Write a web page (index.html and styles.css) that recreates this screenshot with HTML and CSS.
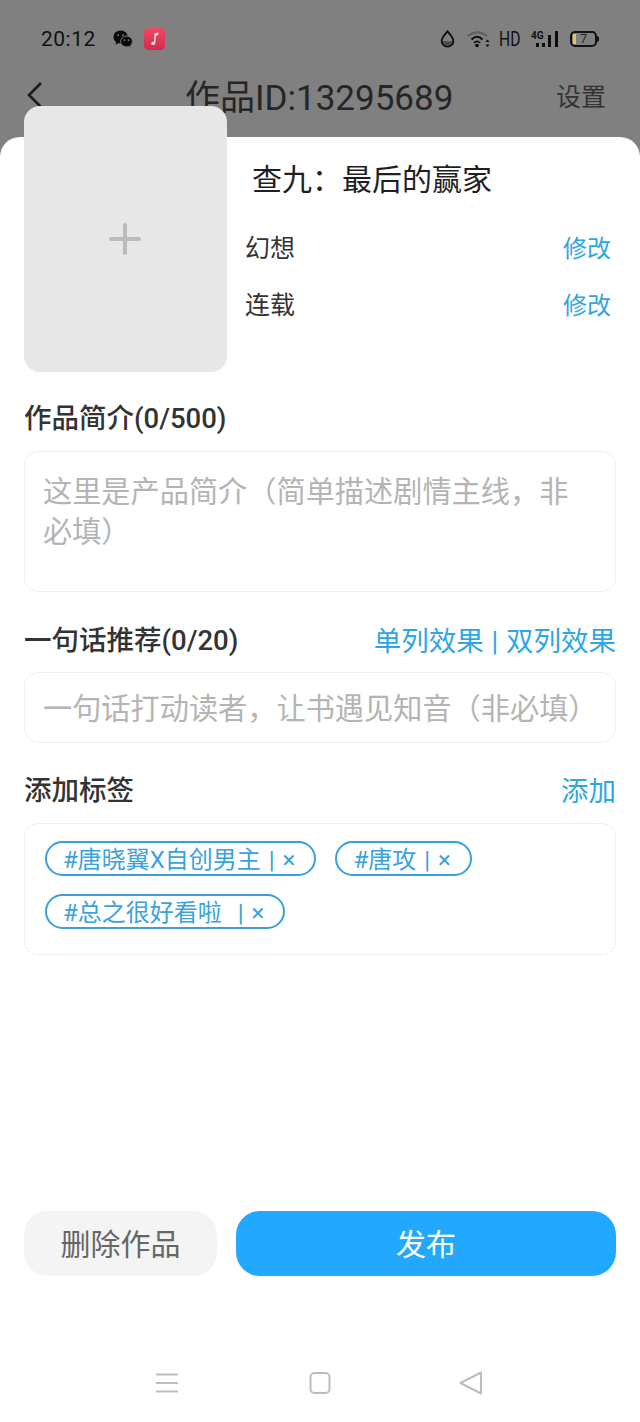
FILE: index.html
```html
<!DOCTYPE html>
<html lang="zh-CN">
<head>
    <meta charset="UTF-8">
    <meta name="viewport" content="width=device-width, initial-scale=1.0">
    <title>作品设置</title>
    <link rel="stylesheet" href="styles.css">
</head>
<body>
    <div class="screen">
        <div class="status-bar">
            <div class="status-left">
                <span class="clock">20:12</span>
                <svg class="wechat-icon" width="20" height="18" viewBox="0 0 17 16">
                    <ellipse cx="6.400" cy="6.200" rx="6.400" ry="5.800" fill="#0a0a0a"/>
                    <path d="M2.600 10l-.8 3 3-1.600z" fill="#0a0a0a"/>
                    <circle cx="4.200" cy="4.600" r=".8" fill="#808080"/>
                    <circle cx="8.400" cy="4.600" r=".8" fill="#808080"/>
                    <ellipse cx="11.600" cy="10.200" rx="5.300" ry="4.800" fill="#0a0a0a" stroke="#808080" stroke-width=".8"/>
                    <path d="M14 14l1 1.600-.2-2.400z" fill="#0a0a0a"/>
                    <circle cx="9.800" cy="9" r=".7" fill="#808080"/>
                    <circle cx="13.400" cy="9" r=".7" fill="#808080"/>
                </svg>
                <svg class="music-icon" width="21" height="22" viewBox="0 0 21 22">
                    <defs>
                        <linearGradient id="musicBg" x1="0" y1="0" x2="0" y2="1">
                            <stop offset="0" stop-color="#ee4a63"/>
                            <stop offset="1" stop-color="#d62a50"/>
                        </linearGradient>
                    </defs>
                    <rect width="21" height="22" rx="4.500" fill="url(#musicBg)"/>
                    <path d="M10.500 5.400l3.800-.9v2.600l-2.400.6-.6 7.400c-.1 1.200-1 1.900-2.200 1.900-1.100 0-1.800-.7-1.800-1.600 0-1 .9-1.700 2-1.700.3 0 .6 0 .7.1z" fill="#fbe3e8"/>
                </svg>
            </div>
            <div class="status-right">
                <svg width="15" height="18" viewBox="0 0 15 18">
                    <path d="M7.500 1.400c2.400 3 5.800 5.800 5.800 9.500 0 3.100-2.600 5.700-5.800 5.700s-5.800-2.600-5.800-5.700c0-3.700 3.400-6.500 5.800-9.500z" fill="none" stroke="#0c0c0c" stroke-width="1.800"/>
                    <path d="M2.600 11.300h9.800c-.3 2.400-2.400 4.400-4.900 4.400s-4.600-2-4.900-4.400z" fill="#4a4a4a"/>
                </svg>
                <svg class="wifi-icon" width="23" height="18" viewBox="0 0 23 18">
                    <path d="M1 6Q10.500-1.500 20 6" fill="none" stroke="#5f5f5f" stroke-width="2"/>
                    <path d="M4.500 9.500Q10 4 15.500 9.500" fill="none" stroke="#0c0c0c" stroke-width="2"/>
                    <path d="M7 12.800Q10 10 13 12.800" fill="none" stroke="#0c0c0c" stroke-width="1.800"/>
                    <circle cx="10" cy="15.500" r="1.800" fill="#0c0c0c"/>
                    <path d="M20.500 9.500l-2 2.500h4zM20.500 17l-2-2.500h4z" fill="#0c0c0c"/>
                </svg>
                <span class="hd">HD</span>
                <div class="signal">
                    <span class="signal-label">4G</span>
                    <svg width="27" height="18" viewBox="0 0 27 18">
                        <path d="M5 13h3v4H5zM11 13h3v4h-3zM17 5h3v12h-3zM24 1h3v16h-3z" fill="#0c0c0c"/>
                    </svg>
                </div>
                <div class="battery">
                    <span class="battery-level"></span>
                    <span class="battery-num">7</span>
                </div>
            </div>
        </div>

        <div class="nav-bar">
            <svg class="back-icon" width="18" height="28" viewBox="0 0 18 28">
                <path d="M15 2L3 14l12 12" fill="none" stroke="#1c1c1c" stroke-width="2.600"/>
            </svg>
            <span class="nav-title">作品ID:13295689</span>
            <span class="nav-action">设置</span>
        </div>

        <div class="sheet">
            <div class="book-head">
                <div class="cover">
                    <svg class="cover-plus" width="32" height="32" viewBox="0 0 32 32">
                        <path d="M2 16h28M16 2v28" stroke="#bbb" stroke-width="4" stroke-linecap="round"/>
                    </svg>
                </div>
                <div class="book-info">
                    <div class="book-title">查九：最后的赢家</div>
                    <div class="info-row"><span>幻想</span><a>修改</a></div>
                    <div class="info-row"><span>连载</span><a>修改</a></div>
                </div>
            </div>

            <div class="field-head field-intro"><span class="field-label">作品简介(0/500)</span></div>
            <div class="box box-intro">这里是产品简介（简单描述剧情主线，非必填）</div>

            <div class="field-head field-rec">
                <span class="field-label">一句话推荐(0/20)</span>
                <a class="field-link">单列效果 | 双列效果</a>
            </div>
            <div class="box box-rec">一句话打动读者，让书遇见知音（非必填）</div>

            <div class="field-head field-tags">
                <span class="field-label">添加标签</span>
                <a class="field-link">添加</a>
            </div>
            <div class="box box-tags">
                <span class="tag">#唐晓翼X自创男主 | ×</span>
                <span class="tag">#唐攻 | ×</span>
                <span class="tag">#总之很好看啦&nbsp; | ×</span>
            </div>

            <div class="actions">
                <button class="btn-delete">删除作品</button>
                <button class="btn-publish">发布</button>
            </div>

            <div class="sys-nav">
                <svg width="24" height="22" viewBox="0 0 24 22">
                    <path d="M1 2.500h22M1 11h22M1 19.500h22" stroke="#bdbdbd" stroke-width="2"/>
                </svg>
                <svg width="22" height="22" viewBox="0 0 22 22">
                    <rect x="1.500" y="1" width="19" height="20" rx="4" fill="none" stroke="#bdbdbd" stroke-width="2"/>
                </svg>
                <svg class="sys-back" width="24" height="24" viewBox="0 0 24 24">
                    <path d="M22 1.500L1.500 12 22 22.500z" fill="none" stroke="#bdbdbd" stroke-width="2" stroke-linejoin="round"/>
                </svg>
            </div>
        </div>
    </div>
</body>
</html>
```

FILE: styles.css
```css
* {
    box-sizing: border-box;
}
body {
    margin: 0;
    font-family: Roboto, "Noto Sans CJK SC", sans-serif;
    background-color: #808080;
}
.screen {
    width: 640px;
    height: 1422px;
    overflow: hidden;
    display: flex;
    flex-direction: column;
}
.status-bar {
    height: 76px;
    padding: 2px 43px 0 41px;
    display: flex;
    justify-content: space-between;
    align-items: center;
}
.status-left, .status-right {
    display: flex;
    align-items: center;
}
.clock {
    font-size: 21px;
    color: #111;
    margin-right: 17px;
    letter-spacing: .5px;
}
.music-icon {
    margin-left: 11px;
}
.wifi-icon {
    margin-left: 12px;
}
.hd {
    width: 21px;
    margin-left: 9px;
    font-size: 20px;
    color: #111;
    transform: scaleX(.78);
    transform-origin: left center;
}
.signal {
    position: relative;
    height: 18px;
    margin-left: 11px;
}
.signal-label {
    position: absolute;
    left: 0;
    top: 0;
    font-size: 10px;
    line-height: 11px;
    font-weight: 700;
    color: #111;
}
.battery {
    position: relative;
    width: 27px;
    height: 16px;
    margin-left: 12px;
    border: 2px solid #111;
    border-radius: 5px;
    text-align: center;
}
.battery::after {
    content: "";
    position: absolute;
    right: -4px;
    top: 3px;
    width: 2px;
    height: 6px;
    background-color: #111;
    border-radius: 0 2px 2px 0;
}
.battery-level {
    position: absolute;
    left: 1px;
    top: 1px;
    width: 3px;
    height: 10px;
    background-color: #e6c45c;
}
.battery-num {
    display: block;
    font-size: 12px;
    line-height: 12px;
    color: #222;
}
.nav-bar {
    height: 61px;
    display: flex;
    align-items: flex-start;
    padding: 3px 34px 0 26px;
}
.back-icon {
    margin-top: 2px;
}
.nav-title {
    margin-left: 141px;
    font-size: 35px;
    line-height: 40px;
    color: #262626;
}
.nav-action {
    margin-left: auto;
    font-size: 25px;
    line-height: 38px;
    color: #333;
}
.sheet {
    flex: 1;
    background-color: #fff;
    border-radius: 20px 20px 0 0;
    padding: 0 24px;
    display: flex;
    flex-direction: column;
}
.book-head {
    display: flex;
    height: 264px;
    margin-top: -31px;
}
.cover {
    width: 203px;
    height: 266px;
    flex: none;
    background-color: #e7e7e7;
    border-radius: 16px;
    display: flex;
    align-items: center;
    justify-content: center;
}
.cover-plus {
    margin-right: 1px;
}
.book-info {
    flex: 1;
    padding: 54px 5px 0 18px;
}
.book-title {
    margin-left: 7px;
    font-size: 30px;
    line-height: 40px;
    color: #1f1f1f;
}
.info-row {
    display: flex;
    justify-content: space-between;
    font-size: 25px;
    line-height: 36px;
    height: 57px;
    color: #333;
}
.book-title + .info-row {
    margin-top: 31px;
}
.info-row a {
    font-size: 24px;
}
.info-row a, .field-link {
    color: #2fa6e4;
}
.field-head {
    display: flex;
    justify-content: space-between;
    align-items: center;
    height: 40px;
}
.field-label {
    font-size: 27.500px;
    font-weight: 500;
    color: #333;
    margin-bottom: 2px;
}
.field-link {
    font-size: 27.500px;
    word-spacing: 1px;
}
.field-intro {
    margin-top: 27px;
}
.box {
    border: 1px solid #f0f0f0;
    border-radius: 14px;
    font-size: 29.200px;
    color: #b4b4b4;
}
.box-intro {
    margin-top: 14px;
    height: 141px;
    padding: 20px 40px 0 18px;
    line-height: 40px;
}
.field-rec {
    margin-top: 27px;
}
.box-rec {
    margin-top: 13px;
    height: 71px;
    padding: 2px 18px 0;
    line-height: 69px;
    white-space: nowrap;
}
.field-tags {
    margin-top: 26px;
}
.box-tags {
    margin-top: 14px;
    height: 132px;
    padding: 17px 20px 0;
    display: flex;
    flex-wrap: wrap;
    align-content: flex-start;
    gap: 18px 19px;
}
.tag {
    height: 35px;
    padding: 3px 19px 0 16px;
    border: 2px solid #3a9fd8;
    border-radius: 18px;
    font-size: 24px;
    line-height: 28px;
    word-spacing: 2px;
    color: #3aa2dc;
    white-space: nowrap;
}
.actions {
    display: flex;
    gap: 19px;
    margin-top: 256px;
}
.actions button {
    height: 65px;
    padding: 0 0 3px;
    border: none;
    border-radius: 24px;
    font-family: inherit;
    font-size: 30px;
}
.btn-delete {
    width: 193px;
    background-color: #f4f4f4;
    color: #666;
}
.btn-publish {
    flex: 1;
    background-color: #23a8ff;
    color: #fff;
}
.sys-nav {
    display: flex;
    align-items: center;
    margin-top: 95px;
    padding-left: 131px;
    gap: 130px;
}
.sys-back {
    margin-left: -2px;
}
```
